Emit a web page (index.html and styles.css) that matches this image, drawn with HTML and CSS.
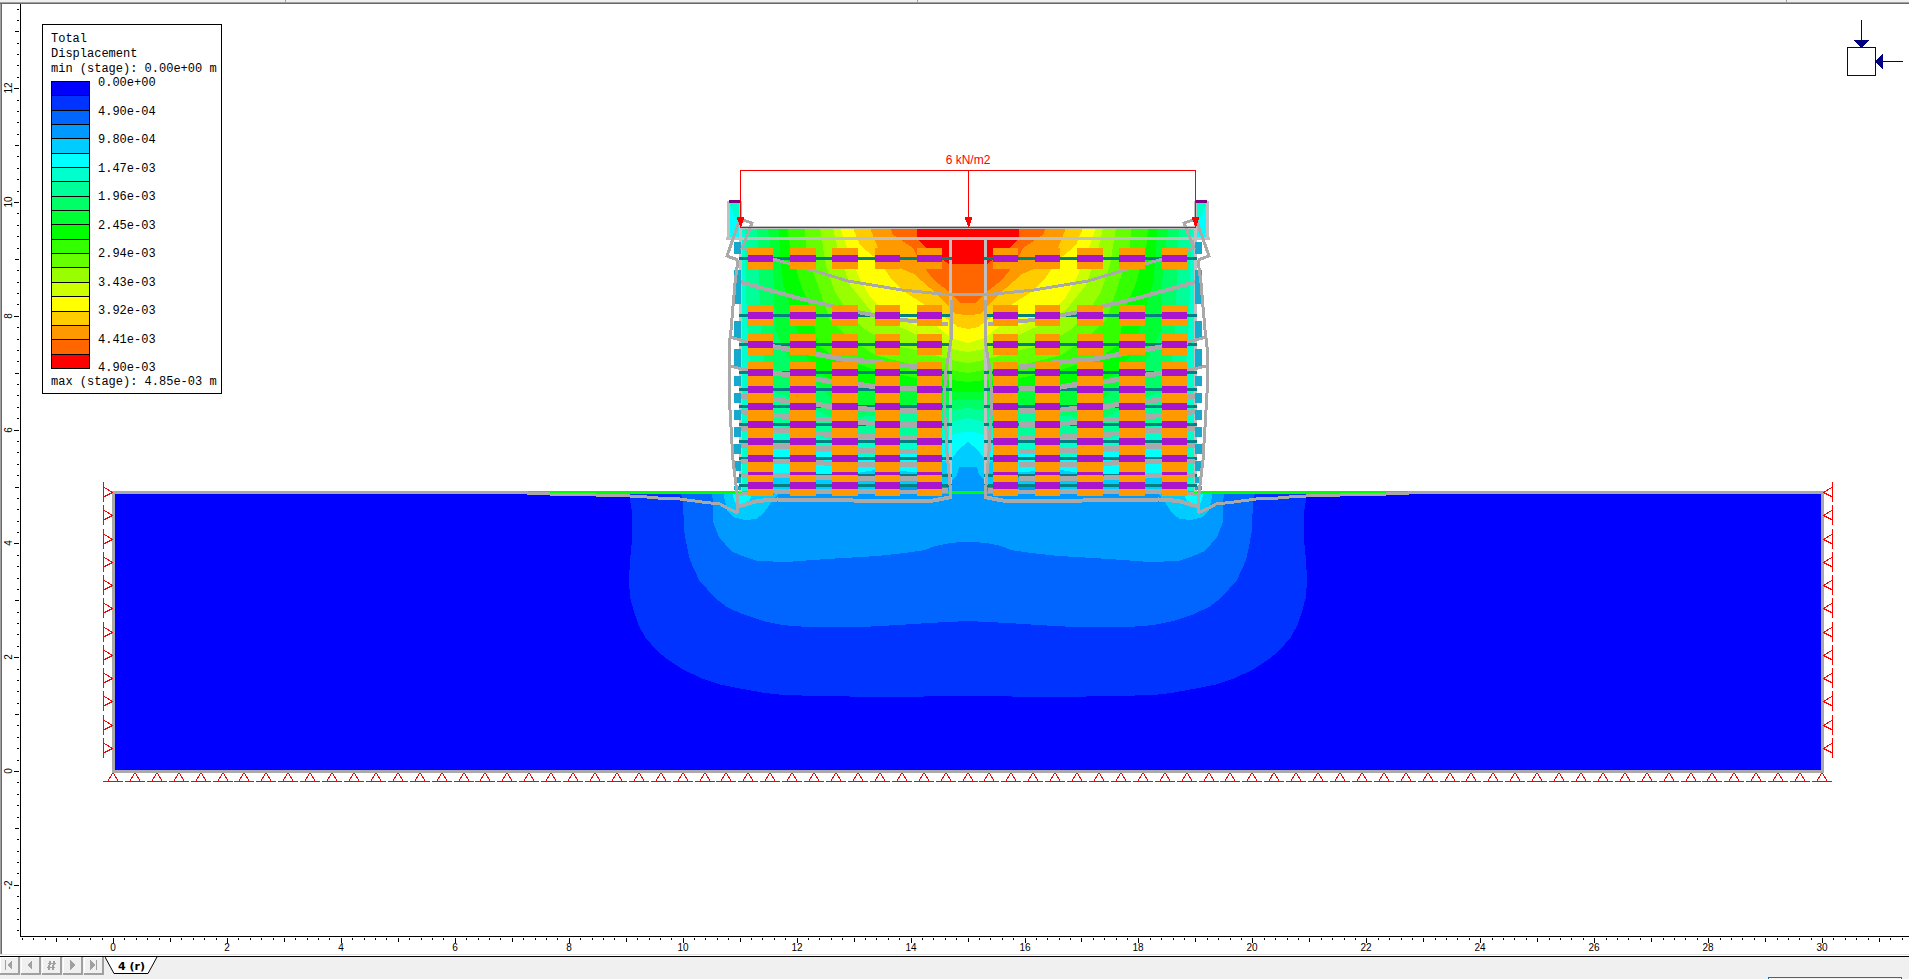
FILE: index.html
```html
<!DOCTYPE html>
<html lang="en">
<head>
<meta charset="utf-8">
<title>Total Displacement</title>
<link rel="stylesheet" href="styles.css">
</head>
<body>
<div class="toolbar-edge"><i></i><i></i><i></i></div>
<main class="view">
  <svg class="scene" viewBox="0 4 1909 949" preserveAspectRatio="xMidYMin meet" role="img" aria-label="Displacement contours of a reinforced soil wall">
    <defs>
      <g id="soil-half">
        <path fill="#0033ff" d="M629 494L632 512V540L630 560L629 580L630 597L633 608L638 624L645 637L657 651L667 659L682 669L703 679L722 685L743 689L765 693L783 695L820 696L880 697L968 696V494Z"/>
        <path fill="#0066ff" d="M681 494L683 500L684 530L687 547L690 560L699 580L715 598L727 607L742 614L763 621L782 625L807 627H862L898 625L928 623L968 621V494Z"/>
        <path fill="#0099ff" d="M711 492L713 500V522L719 537L731 551L745 557L758 561L787 562L812 560L843 558L877 556L905 553L925 550L935 546L950 543L962 542H968V492Z"/>
        <path fill="#00ccff" d="M723 492L727 510L733 517L745 520L756 519L763 514L768 507L775 497L780 492Z"/>
        <path fill="#00ffff" d="M732 492L735 503L743 504L750 500L752 492Z"/>
      </g>
      <g id="wall-half">
        <path fill="#00ffcc" d="M741 228H968V492H741Z"/>
        <path fill="#00ff99" d="M745 228L746 290L748 340L752 385L773 425L790 428L832 440L875 435L917 436L951 422L968 418V228Z"/>
        <path fill="#00ff66" d="M757 228L759 280L761 330L765 370L773 392L790 397L832 418L875 416L917 412L951 410L968 408V228Z"/>
        <path fill="#00ff33" d="M768 228L771 255L774 283L775 330L790 360L816 384L832 398L875 408L917 404L951 400L968 400V228Z"/>
        <path fill="#00ff00" d="M779 228L780 255L783 283L797 330L806 355L816 370L832 380L875 386L917 390L951 392H968V228Z"/>
        <path fill="#33ff00" d="M788 228L789 243L800 283L810 307L818 345L832 355L875 370L917 378L951 380L968 382V228Z"/>
        <path fill="#66ff00" d="M805 228L806 250L817 283L830 320L848 337L875 355L917 366L951 370L968 373V228Z"/>
        <path fill="#99ff00" d="M820 228L826 265L835 292L852 318L866 330L890 345L917 350L951 360L968 363V228Z"/>
        <path fill="#ccff00" d="M833 228L838 250L850 285L870 310L890 322L917 335L951 349L968 352V228Z"/>
        <path fill="#ffff00" d="M840 228L848 250L858 275L870 297L885 312L915 325H935L951 338L968 343V228Z"/>
        <path fill="#ffcc00" d="M853 228L860 245L880 262L892 280L905 292L925 305L943 316L958 327L968 329V228Z"/>
        <path fill="#ff9900" d="M870 228L878 248L890 264L914 274L930 288L945 302L955 314L968 315V228Z"/>
        <path fill="#ff6600" d="M891 228L892 234L913 248L920 262L934 280L952 294L960 303H968V228Z"/>
        <path fill="#ff0000" d="M917 228V239L928 249L949 264H968V228Z"/>
        <path fill="#00ffff" d="M748 492L757 470L773 444H790L805 452H832L875 458L917 450L940 440L951 435L963 432H968V492Z"/>
        <path fill="#00ccff" d="M758 492L770 475L832 477L875 470L917 472L935 462L951 460L958 450L968 442V492Z"/>
        <path fill="#0099ff" d="M850 492L917 486L948 484L957 475L959 467H968V492Z"/>
      </g>
      <g id="panel-half">
        <path fill="#00ffff" d="M729 202H740V238H729Z"/>
        <path fill="#00ffcc" d="M729 202H740V222L736 219L730 206Z"/>
        <g class="grid-line"><path d="M728.5 201V239.5M726 238.5H968M740.5 201V492M950.5 240V497M741 227.5H968"/></g>
        <path fill="#800080" d="M729 200H740V203H729Z"/>
        <g class="facing"></g>
      </g>
      <g id="bars-half"></g>
      <g id="deformed-half" class="deformed">
        <path d="M743 220L752 223L742 248L748 250M740 219L727 256L738 260M738 260L735 283L731 330L729 347V393L731 427L733 460L737 493L738 513"/>
        <path d="M527 493.5L572 494.5L619 495.5L641 496.5L658 498L680 499L702 502L720 504L727 508L738 513"/>
        <path d="M951 300V340L946 370L944 403L946 430L947 453L949 473L951 497"/>
        <path d="M773 259L805 268L848 281L902 290L942 294H968"/>
        <g class="thick">
          <path d="M737 507L757 501L777 499.5L853 500.5L897 501.5L933 500.5L952 497"/>
          <path d="M741 282L758 287L798 298L832 306L862 313L902 320L948 324"/>
        </g>
        <g class="thickest">
          <path d="M748 342L775 347L815 354L842 359L875 362L917 367"/>
          <path d="M773 373L790 375L816 379L832 382L858 384L875 387L917 389"/>
          <path d="M741 396L748 397L773 399L790 402L816 404L832 407L858 408L875 410L917 411"/>
          <path d="M741 411L748 413L773 415L790 417L816 419L832 420L858 422L875 424H917"/>
          <path d="M741 428L773 430L790 431L816 433L832 435L875 437L917 438"/>
          <path d="M741 445L773 446L790 447L832 449L858 450L900 452L917 451"/>
          <path d="M741 461H790L816 462L832 464H917"/>
          <path d="M741 475L790 476L832 478H917"/>
          <path d="M748 493L773 491L875 492H917L948 490"/>
        </g>
        <path d="M730 337L748 342M730 366L742 369L773 373M737 495L748 493"/>
      </g>
      <g id="blocks-half"></g>
      <path id="load-arrow" d="M-3 217H4V220H3L2 226H0L-2 220H-3Z" fill="#ff0000"/>
    </defs>

    <rect x="113.5" y="492.5" width="1709" height="279" fill="#0000ff"/>
    <use href="#soil-half"/><use href="#soil-half" class="mirror"/>
    <rect class="boundary" x="113.5" y="492.5" width="1709" height="279"/>
    <use href="#wall-half"/><use href="#wall-half" class="mirror"/>
    <path d="M528 492.5H1408" stroke="#00ff00" stroke-width="3"/>
    <use href="#panel-half"/><use href="#panel-half" class="mirror"/>
    <use href="#bars-half"/><use href="#bars-half" class="mirror"/>
    <use href="#deformed-half"/><use href="#deformed-half" class="mirror"/>
    <use href="#blocks-half"/><use href="#blocks-half" class="mirror-blocks"/>

    <g class="load">
      <path d="M740.5 227V170.5H1195.5V227M968.5 170V227M740 227.5H1196"/>
      <use href="#load-arrow" x="740"/><use href="#load-arrow" x="968"/><use href="#load-arrow" x="1195"/>
      <text x="968" y="164">6 kN/m2</text>
    </g>
    <path id="supports" class="supports"/>

    <g class="axes-icon">
      <rect x="1847.5" y="47.5" width="28" height="28"/>
      <path d="M1861.5 20V40M1883 61.5H1903"/>
      <path class="head" d="M1854 40H1869L1861.5 48ZM1883 54V69L1875 61.5Z"/>
    </g>

    <path class="ruler" d="M20.5 4V936.5H1909"/>
    <path id="ticks" class="ruler"/>
    <g id="ruler-labels" class="ruler-labels"></g>
  </svg>

  <section class="legend" aria-label="Legend">
    <div class="legend-title">Total<br>Displacement</div>
    <div>min (stage): 0.00e+00 m</div>
    <div class="legend-body">
      <div class="swatches" id="swatches"></div>
      <div class="values">
        <span>0.00e+00</span><span>4.90e-04</span><span>9.80e-04</span><span>1.47e-03</span><span>1.96e-03</span><span>2.45e-03</span><span>2.94e-03</span><span>3.43e-03</span><span>3.92e-03</span><span>4.41e-03</span><span>4.90e-03</span>
      </div>
    </div>
    <div>max (stage): 4.85e-03 m</div>
  </section>
</main>

<footer class="tabs">
  <button class="nav" type="button" aria-label="First stage"><svg viewBox="0 0 10 10"><path d="M1 0h1v10H1zM8 0v10L3 5z"/></svg></button>
  <button class="nav" type="button" aria-label="Previous stage"><svg viewBox="0 0 10 10"><path d="M7 0v10L2 5z"/></svg></button>
  <button class="nav" type="button" aria-label="Go to stage"><svg viewBox="0 0 10 10"><path d="M3 1h2L4 10H2zM7 1h2L8 10H6zM2 3h8v1H2zM1 7h8v1H1z"/></svg></button>
  <button class="nav" type="button" aria-label="Next stage"><svg viewBox="0 0 10 10"><path d="M3 0v10l5-5z"/></svg></button>
  <button class="nav" type="button" aria-label="Last stage"><svg viewBox="0 0 10 10"><path d="M2 0v10l5-5zM8 0h1v10H8z"/></svg></button>
  <button class="tab" type="button">
    <svg class="tab-shape" viewBox="0 0 53 18"><path d="M0 0L9 16.5H43L52 0"/></svg>
    <span>4 (r)</span>
  </button>
  <div class="status-box"></div>
</footer>
<script src="scene.js"></script>
</body>
</html>
```

FILE: styles.css
```css
* { box-sizing: border-box; }

body {
  margin: 0;
  height: 100vh;
  display: flex;
  flex-direction: column;
  overflow: hidden;
  background: #f0f0f0;
  font-family: "Liberation Sans", Arial, sans-serif;
}

.toolbar-edge {
  flex: none;
  height: 4px;
  display: grid;
  grid-template-columns: 15% 33.1% 45.5%;
  background: #f0f0f0;
  border-bottom: 1px solid #696969;
  box-shadow: inset 0 -1px #a0a0a0;
}
.toolbar-edge i { border-right: 1px solid #a0a0a0; height: 2px; }

.view {
  position: relative;
  flex: 1;
  min-height: 0;
  background: #fff;
  border-bottom: 1px solid #e3e3e3;
  box-shadow: inset 1px 0 #a0a0a0, inset 2px 0 #696969;
}

.scene {
  display: block;
  width: 100%;
  height: 100%;
  fill: none;
  shape-rendering: crispEdges;
}

.mirror { transform: translateX(1936px) scaleX(-1); }
.mirror-blocks { transform: translateX(1935px) scaleX(-1); }
.boundary { stroke: #a9a9a9; stroke-width: 3; }
.grid-line { stroke: #c0c0c0; stroke-width: 3; }
.deformed { stroke: #a9a9a9; stroke-width: 3; }
.deformed .thick { stroke-width: 4; }
.deformed .thickest { stroke-width: 5; }
.facing { fill: #16a9ce; }
.bar { stroke: #008080; stroke-width: 3; }
.grip { fill: #ff9900; }
.core { fill: #a915cc; }

.load { stroke: #ff0000; }
.load use { stroke: none; }
.load text {
  stroke: none;
  fill: #ff0000;
  font-size: 12px;
  text-anchor: middle;
}

.supports { stroke: #ff0000; }
.axes-icon { stroke: #000080; }
.axes-icon .head { fill: #000080; stroke: none; }
.ruler { stroke: #000; }
.ruler-labels { fill: #000; font-size: 10px; text-anchor: middle; }

.legend {
  position: absolute;
  left: 42px;
  top: 20px;
  width: 180px;
  padding: 7px 0 3px 8px;
  border: 1px solid #000;
  background: #fff;
  font: 12px/15px "Liberation Mono", "Courier New", monospace;
  white-space: nowrap;
}
.legend-body { display: flex; gap: 8px; height: 298px; }
.swatches {
  display: grid;
  width: 39px;
  margin: 4px 0 6px;
  gap: 1px;
  padding: 1px;
  background: #000;
}
.values {
  display: flex;
  flex-direction: column;
  justify-content: space-between;
  line-height: 13px;
}

.tabs {
  position: relative;
  flex: none;
  height: 24px;
  display: flex;
  gap: 1px;
  align-items: flex-start;
  background: #f0f0f0;
  border-top: 1px solid #fff;
  box-shadow: inset 0 1px #000;
  padding-top: 1px;
}
.nav {
  width: 20px;
  height: 18px;
  padding: 0;
  display: grid;
  place-items: center;
  background: #f0f0f0;
  border: solid #a0a0a0;
  border-width: 0 2px 2px 0;
  box-shadow: inset 1px 1px #fff;
}
.nav svg { width: 10px; height: 10px; fill: #a0a0a0; shape-rendering: crispEdges; }

.tab {
  position: relative;
  width: 53px;
  height: 18px;
  padding: 0;
  border: 0;
  background: none;
  font: bold 11px/17px "DejaVu Sans", sans-serif;
  color: #000;
}
.tab span { position: relative; }
.tab-shape {
  position: absolute;
  inset: 0;
  fill: #fff;
  stroke: #000;
}

.status-box {
  position: absolute;
  right: 7px;
  bottom: 0;
  width: 134px;
  height: 2px;
  border: 1px solid #0078d7;
  border-bottom: 0;
}
```

FILE: scene.js
```js
const SVG = "http://www.w3.org/2000/svg";
const byId = id => document.getElementById(id);

function add(parent, name, attrs) {
  const el = document.createElementNS(SVG, name);
  for (const key in attrs) el.setAttribute(key, attrs[key]);
  parent.appendChild(el);
  return el;
}

// Legend colours, cold to hot
const colours = ["#0000ff", "#0033ff", "#0066ff", "#0099ff", "#00ccff", "#00ffff", "#00ffcc",
  "#00ff99", "#00ff66", "#00ff33", "#00ff00", "#33ff00", "#66ff00", "#99ff00", "#ccff00",
  "#ffff00", "#ffcc00", "#ff9900", "#ff6600", "#ff0000"];
for (const colour of colours) {
  const cell = document.createElement("div");
  cell.style.background = colour;
  byId("swatches").appendChild(cell);
}

// Facing elements: top and bottom of each
const facings = [[242, 254], [270, 304], [321, 338], [349, 367], [376, 386], [393, 403],
  [410, 420], [427, 437], [444, 454], [461, 471], [477, 483], [486, 490]];
for (const [top, bottom] of facings) {
  add(document.querySelector(".facing"), "rect", { x: 734, y: top, width: 7, height: bottom - top });
}

// Reinforcement layers, and the left edge and width of each grip column
const layers = [258, 315, 344, 372, 389, 406, 424, 441, 458, 475, 485];
const columns = [[748, 25], [790, 26], [832, 26], [875, 25], [917, 25]];
for (const y of layers) {
  add(byId("bars-half"), "path", { class: "bar", d: `M739 ${y + 0.5}H952` });
  for (const [x, width] of columns) {
    add(byId("blocks-half"), "rect", { class: "grip", x, y: y - 10, width, height: 21 });
  }
}
for (const y of layers) {
  const thin = y === 475;
  for (const [x, width] of columns) {
    add(byId("blocks-half"), "rect", { class: "core", x, y: y - 3, width, height: thin ? 3 : 7 });
  }
}

// Roller supports
let d = "";
for (let i = 0; i < 12; i++) {
  const y = Math.round(492 + i * 23.25);
  d += `M103.5 ${y - 10}v20M103.5 ${y - 5}l9 5.5l-9 4.5`;
  d += `M1832.5 ${y - 10}v20M1832.5 ${y - 5}l-9 5.5l9 4.5`;
}
for (let i = 0; i <= 78; i++) {
  const x = Math.round(113 + i * 1709 / 78);
  d += `M${x - 10} 781.5h20M${x - 5} 781l4.5-8h1l4.5 8`;
}
byId("supports").setAttribute("d", d);

// Rulers: a tick each 0.2 m, a longer one each metre, a number each two metres
const labels = byId("ruler-labels");
let ticks = "";
const tickLength = i => i % 10 === 0 ? 5 : i % 5 === 0 ? 4 : 2;
for (let i = -8; i <= 157; i++) {
  const x = Math.round(113 + i * 11.394);
  ticks += `M${x + 0.5} 938v${tickLength(i)}`;
  if (i % 10 === 0) add(labels, "text", { x, y: 951 }).textContent = i / 5;
}
for (let i = -14; i <= 67; i++) {
  const y = Math.round(771 - i * 11.38);
  ticks += `M19 ${y + 0.5}h${-tickLength(i)}`;
  if (i % 10 === 0) {
    add(labels, "text", { transform: `translate(12 ${y}) rotate(-90)` }).textContent = i / 5;
  }
}
byId("ticks").setAttribute("d", ticks);
```
